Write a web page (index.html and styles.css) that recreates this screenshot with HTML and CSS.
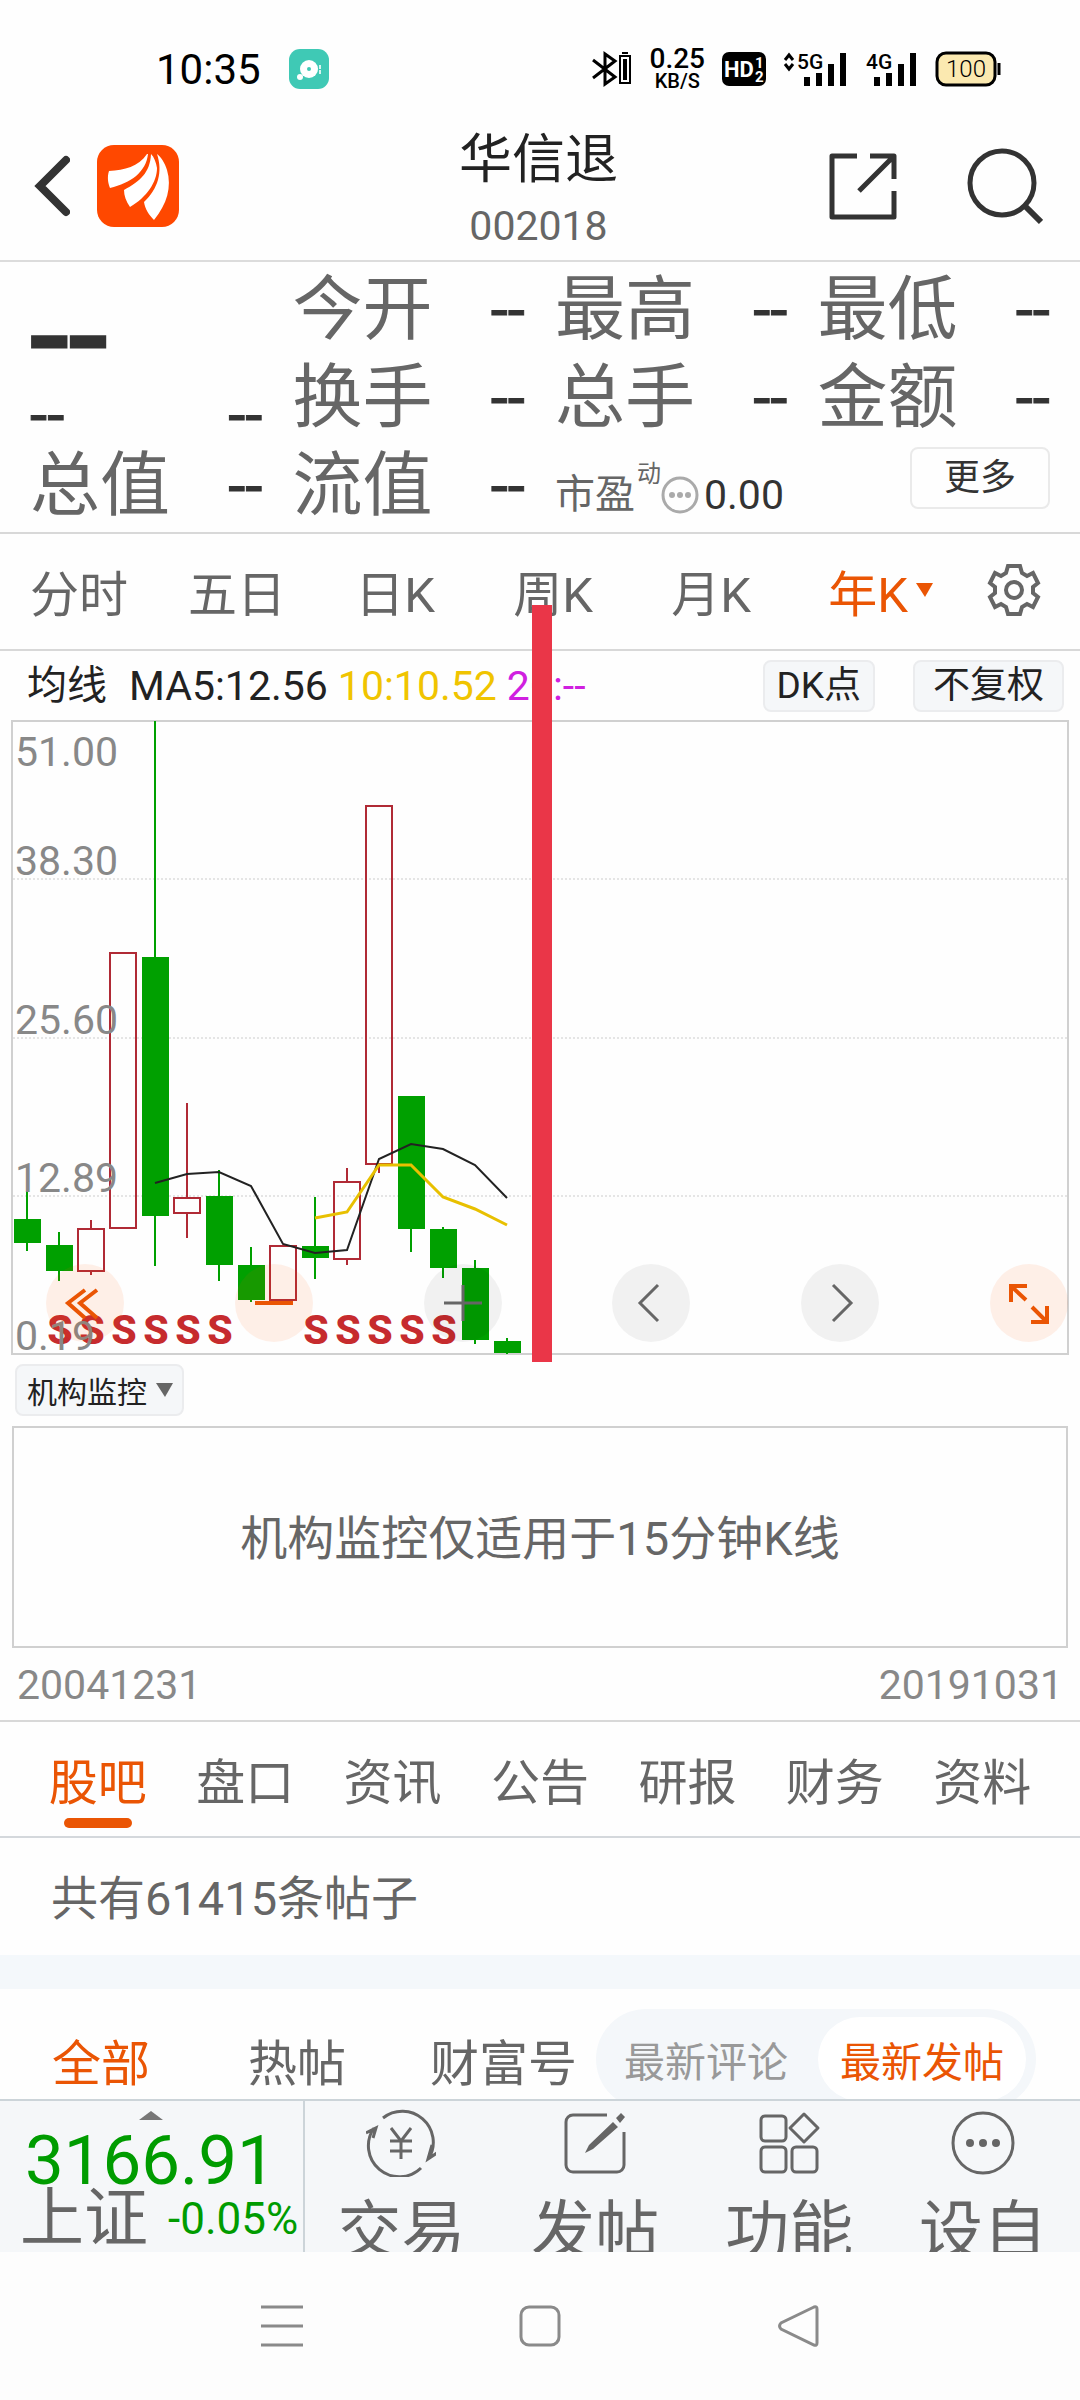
FILE: index.html
```html
<!DOCTYPE html>
<html lang="zh-CN">
<head>
<meta charset="utf-8">
<meta name="viewport" content="width=device-width, initial-scale=1">
<title>华信退 002018</title>
<link rel="stylesheet" href="styles.css">
</head>
<body>
<div class="status">
  <div class="status-side">
    <span class="clock">10:35</span>
    <svg width="40" height="40" viewBox="0 0 40 40"><rect width="40" height="40" rx="11" fill="#3fc9b5"/><circle cx="20" cy="20" r="9" fill="#fff"/><circle cx="20" cy="20" r="2" fill="#3fc9b5"/><circle cx="11" cy="28" r="3" fill="#fff"/><path d="M31 16v9" stroke="#d9f4f0" stroke-width="2" stroke-dasharray="4 1"/></svg>
  </div>
  <div class="status-side status-right">
    <svg width="40" height="36" viewBox="0 0 40 36" fill="none" stroke="#000" stroke-width="3"><path d="M1 9l22 17-10 7V3l10 7L1 27"/><path d="M28 5h10v27H28zM30 2h6" stroke-width="2"/><path d="M33 8v21" stroke-width="4"/></svg>
    <span class="speed"><b>0.25</b><small>KB/S</small></span>
    <svg width="44" height="36" viewBox="0 0 44 36"><rect y="1" width="44" height="34" rx="7"/><text class="hd" x="2" y="26">HD</text><text class="hd-small" x="33" y="17">1</text><text class="hd-small" x="33" y="31">2</text></svg>
    <svg class="signal" width="66" height="36" viewBox="0 0 66 36"><path d="M2 9l4-5 4 5M2 13l4 5 4-5" fill="none" stroke="#000" stroke-width="3"/><text class="net" x="14" y="18">5G</text><path d="M24 35v-9M36 35v-13M48 35V13M60 35V2" stroke="#000" stroke-width="6"/></svg>
    <svg class="signal" width="52" height="36" viewBox="0 0 52 36"><text class="net" x="0" y="18">4G</text><path d="M11 35v-9M23 35v-13M35 35V13M47 35V2" stroke="#000" stroke-width="6"/></svg>
    <svg width="66" height="36" viewBox="0 0 66 36"><rect x="2" y="2" width="58" height="32" rx="9" fill="#fbe9b0" stroke="#000" stroke-width="3"/><path d="M64 12v12" stroke="#000" stroke-width="3"/><text class="charge" x="31" y="26" text-anchor="middle">100</text></svg>
  </div>
</div>

<header class="header">
  <div class="header-side">
    <button class="icon-btn" aria-label="返回"><svg width="36" height="62" viewBox="0 0 36 62" fill="none" stroke="#333" stroke-width="8" stroke-linecap="round"><path d="M32 5L6 31l26 26"/></svg></button>
    <svg class="logo" width="82" height="82" viewBox="0 0 82 82"><rect width="82" height="82" rx="17" fill="#ff4800"/><g fill="#fff"><path d="M50 9C41 22 28 25 12 26c-2 6-1 12 1 17C34 38 49 27 51 9Z"/><path d="M54 9C53 28 43 36 27 45c0 6 2 11 6 17C50 52 60 37 60 23 59 17 57 12 54 9Z"/><path d="M60 9C66 27 61 44 47 57c1 7 5 13 10 18C70 59 75 42 70 25 68 18 64 12 60 9Z"/></g></svg>
  </div>
  <div class="title"><h1>华信退</h1><span>002018</span></div>
  <div class="header-side header-right">
    <button class="icon-btn" aria-label="分享"><svg width="68" height="68" viewBox="0 0 68 68" fill="none" stroke="#333" stroke-width="5" stroke-linejoin="round"><path d="M28 4H3v61h62V39M41 4h24v23M65 4L30 39"/></svg></button>
    <button class="icon-btn" aria-label="搜索"><svg width="76" height="78" viewBox="0 0 76 78" fill="none" stroke="#333" stroke-width="5"><circle cx="35" cy="36" r="32"/><path d="M57 58l17 17" stroke-width="6"/></svg></button>
  </div>
</header>

<section class="quotes">
  <div class="price"><strong>--</strong><div><i>--</i><i>--</i></div></div>
  <div class="cell"><span>今开</span><i>--</i></div>
  <div class="cell"><span>最高</span><i>--</i></div>
  <div class="cell"><span>最低</span><i>--</i></div>
  <div class="cell"><span>换手</span><i>--</i></div>
  <div class="cell"><span>总手</span><i>--</i></div>
  <div class="cell"><span>金额</span><i>--</i></div>
  <div class="cell"><span>总值</span><i>--</i></div>
  <div class="cell"><span>流值</span><i>--</i></div>
  <div class="cell cell-wide">
    <p class="pe">市盈<sup>动</sup><svg width="38" height="38" viewBox="0 0 38 38"><circle cx="19" cy="19" r="17" fill="none" stroke="#aaa" stroke-width="3"/><g fill="#aaa"><circle cx="11" cy="19" r="3"/><circle cx="19" cy="19" r="3"/><circle cx="27" cy="19" r="3"/></g></svg><b>0.00</b></p>
    <button class="more">更多</button>
  </div>
</section>

<nav class="periods">
  <button>分时</button><button>五日</button><button>日K</button><button>周K</button><button>月K</button><button class="on">年K<svg width="18" height="14" viewBox="0 0 18 14"><path d="M0 0h17L9 14Z" fill="#ea5504"/></svg></button>
  <button class="gear" aria-label="设置"><svg width="56" height="56" viewBox="-28 -28 56 56" fill="none" stroke="#666" stroke-width="4"><path d="M-6-24H6L8-17 13-14 19-17 24-7 19-3V3L24 7 19 17 13 14 8 17 6 24H-6L-8 17-13 14-19 17-24 7-19 3V-3L-24-7-19-17-13-14-8-17Z"/><circle r="8"/></svg></button>
</nav>

<section class="kline">
  <div class="legend">
    <span class="ma-name">均线</span><span>MA5:12.56</span><span class="ma10">10:10.52</span><span class="ma20">20:--</span>
    <div class="legend-btns"><button class="chip">DK点</button><button class="chip">不复权</button></div>
  </div>
  <div class="chart">
    <svg class="plot" viewBox="0 720 1080 636">
      <rect x="12" y="721" width="1056" height="633" fill="none" stroke="#d0d0d0" stroke-width="2"/>
      <path d="M13 879h1055M13 1038h1055M13 1196h1055" stroke="#ccc" stroke-dasharray="2 2"/>
      <g stroke="#00a000" stroke-width="2"><path d="M27 1191v60M59 1232v49M155 721v545M219 1170v111M251 1247v55M315 1197v82M411 1229v23M443 1227v51M475 1260v84M507 1338v16"/></g>
      <g fill="#00a000"><path d="M14 1219h27v24H14zM46 1245h27v26H46zM142 957h27v259h-27zM206 1196h27v69h-27zM238 1265h27v35h-27zM302 1246h27v12h-27zM398 1096h27v133h-27zM430 1229h27v39h-27zM462 1268h27v72h-27zM494 1341h27v12h-27z"/></g>
      <g fill="none" stroke="#b02a35" stroke-width="2"><path d="M78 1229h26v42H78zM110 953h26v275h-26zM174 1198h26v15h-26zM270 1246h26v54h-26zM334 1182h26v77h-26zM366 806h26v358h-26z"/><path d="M91 1220v9M91 1271v4M187 1103v95M187 1213v25M283 1300v5M347 1168v14M347 1259v6M379 1164v9"/></g>
      <path d="M155 1183l32-9 32-2 32 14 32 58 32 9 32-3 32-91 32-15 32 5 32 16 32 33" fill="none" stroke="#222" stroke-width="2"/>
      <path d="M315 1218l32-6 32-47h32l32 32 32 12 32 16" fill="none" stroke="#e8c000" stroke-width="3"/>
      <g class="sell"><text x="60" y="1344">S</text><text x="92" y="1344">S</text><text x="124" y="1344">S</text><text x="156" y="1344">S</text><text x="188" y="1344">S</text><text x="220" y="1344">S</text><text x="316" y="1344">S</text><text x="348" y="1344">S</text><text x="380" y="1344">S</text><text x="412" y="1344">S</text><text x="444" y="1344">S</text></g>
      <g class="axis"><text x="15" y="766">51.00</text><text x="15" y="875">38.30</text><text x="15" y="1034">25.60</text><text x="15" y="1192">12.89</text><text x="15" y="1350">0.19</text></g>
    </svg>
    <div class="tools">
      <button class="tool warm" aria-label="最左"><svg viewBox="0 0 78 78"><path d="M39 26L22 39l17 15M51 26L34 39l17 15"/></svg></button>
      <button class="tool warm" aria-label="缩小"><svg viewBox="0 0 78 78"><path d="M20 39h38"/></svg></button>
      <button class="tool" aria-label="放大"><svg viewBox="0 0 78 78"><path d="M20 39h38M39 21v36"/></svg></button>
      <button class="tool" aria-label="左移"><svg viewBox="0 0 78 78"><path d="M46 21L28 39l18 18"/></svg></button>
      <button class="tool" aria-label="右移"><svg viewBox="0 0 78 78"><path d="M32 21l18 18-18 18"/></svg></button>
      <button class="tool warm" aria-label="全屏"><svg viewBox="0 0 78 78"><path d="M21 38V22h16M21 22l15 14M57 42v16H41M57 58L42 43"/></svg></button>
    </div>
  </div>
  <div class="marker"></div>
</section>

<section class="monitor">
  <div class="picker"><select aria-label="指标"><option>机构监控</option></select><svg width="18" height="14" viewBox="0 0 18 14"><path d="M0 0h17L9 14Z" fill="#666"/></svg></div>
  <div class="notice">机构监控仅适用于15分钟K线</div>
  <div class="dates"><span>20041231</span><span>20191031</span></div>
</section>

<nav class="tabs">
  <button class="on">股吧</button><button>盘口</button><button>资讯</button><button>公告</button><button>研报</button><button>财务</button><button>资料</button>
</nav>
<p class="count">共有61415条帖子</p>

<section class="feed">
  <nav class="feed-tabs"><button class="on">全部</button><button>热帖</button><button>财富号</button></nav>
  <div class="sort"><button>最新评论</button><button class="on">最新发帖</button></div>
</section>

<footer class="dock">
  <div class="index">
    <svg class="up" width="24" height="9" viewBox="0 0 24 9"><path d="M0 9L12 0l12 9Z" fill="#777"/></svg>
    <b>3166.91</b>
    <div><span>上证</span><em>-0.05%</em></div>
  </div>
  <nav class="actions">
    <button><svg width="70" height="68" viewBox="366 2108 70 68" fill="none" stroke="#666" stroke-width="3"><path d="M383 2117a31 31 0 0 1 46 40M437 2152l-9 6 4-14M366 2132l10-5-3 10M374 2127a31 31 0 0 0 47 40M391 2127l10 13 10-13M401 2140v18M390 2140h22M390 2150h22"/></svg>交易</button>
    <button><svg width="70" height="68" viewBox="560 2108 70 68" fill="none" stroke="#666" stroke-width="3"><path d="M607 2114h-34a7 7 0 0 0-7 7v43a7 7 0 0 0 7 7h44a7 7 0 0 0 7-7v-33"/><path d="M613 2121l5 5-25 22-8 4 4-8zM616 2117l5-5 4 4-5 6z" fill="#666" stroke="none"/></svg>发帖</button>
    <button><svg width="70" height="68" viewBox="754 2108 70 68" fill="none" stroke="#666" stroke-width="3"><rect x="761" y="2115" width="25" height="25" rx="4"/><rect x="761" y="2146" width="25" height="25" rx="4"/><rect x="792" y="2146" width="25" height="25" rx="4"/><path d="M804 2113l14 14-14 14-14-14z" stroke-linejoin="round"/></svg>功能</button>
    <button><svg width="70" height="68" viewBox="948 2108 70 68" fill="none" stroke="#666" stroke-width="3"><circle cx="983" cy="2142" r="30"/><g fill="#666" stroke="none"><circle cx="970" cy="2142" r="4"/><circle cx="983" cy="2142" r="4"/><circle cx="996" cy="2142" r="4"/></g></svg>设自</button>
  </nav>
</footer>

<nav class="system">
  <button aria-label="最近任务"><svg width="42" height="42" viewBox="0 0 42 42"><path d="M0 2h42M0 21h42M0 40h42"/></svg></button>
  <button aria-label="主页"><svg width="42" height="42" viewBox="0 0 42 42"><rect x="2" y="2" width="38" height="38" rx="8"/></svg></button>
  <button aria-label="后退"><svg width="42" height="42" viewBox="0 0 42 42"><path d="M37 2L4 18q-3 3 0 6l33 16q3 1 3-2V4q0-3-3-2Z"/></svg></button>
</nav>
</body>
</html>
```
FILE: styles.css
```css
* { box-sizing: border-box; }
body { margin: 0; background: #fefefe; color: #666; font-family: Roboto, "Noto Sans CJK SC", sans-serif; font-size: 49px; }
button { border: 0; padding: 0; background: none; color: inherit; font: inherit; white-space: nowrap; }
svg { display: block; flex: none; }
h1, p { margin: 0; font-weight: 400; }
b, i, em, strong { font-weight: 400; font-style: normal; }

.status { display: flex; justify-content: space-between; height: 112px; padding: 26px 79px 0 156px; color: #000; }
.status-side { display: flex; align-items: center; gap: 28px; }
.clock { font-size: 42px; }
.status-right { gap: 17px; }
.speed { display: flex; flex-direction: column; align-items: center; line-height: 20px; }
.speed b { font-size: 28px; font-weight: 500; line-height: 24px; }
.speed small { font-size: 20px; font-weight: 500; }
.hd { fill: #fff; font-size: 22px; font-weight: 700; }
.hd-small { fill: #fff; font-size: 15px; font-weight: 700; }
.net { font-size: 21px; font-weight: 500; }
.charge { font-size: 24px; font-weight: 300; }

.header { display: grid; grid-template-columns: 1fr auto 1fr; align-items: center; height: 150px; padding: 0 37px 0 34px; border-bottom: 2px solid #dcdcdc; }
.header-side { display: flex; align-items: center; gap: 27px; }
.header-right { justify-content: flex-end; gap: 70px; }
.title { display: flex; flex-direction: column; align-items: center; padding-top: 14px; line-height: 66px; }
.title h1 { color: #222; font-size: 53px; }
.title span { font-size: 41px; }

.quotes { display: grid; grid-template-columns: repeat(4, 1fr); grid-auto-rows: 88px; padding: 4px 0 2px 30px; border-bottom: 2px solid #d8d8d8; }
.quotes i { color: #333; font-size: 62px; -webkit-text-stroke: 1px #333; }
.price { grid-row: span 2; padding-right: 30px; }
.price strong { display: block; height: 122px; color: #333; font-size: 140px; line-height: 140px; -webkit-text-stroke: 3px #333; }
.price div { display: flex; justify-content: space-between; line-height: 54px; }
.cell { display: flex; align-items: center; justify-content: space-between; padding-right: 30px; font-size: 70px; line-height: 88px; }
.cell-wide { grid-column: span 2; }
.pe { display: flex; align-items: center; padding-top: 18px; font-size: 40px; line-height: 66px; }
.pe sup { align-self: flex-start; font-size: 24px; line-height: 24px; padding-left: 2px; }
.pe b { padding-left: 5px; color: #333; font-size: 41px; }
.more { width: 140px; height: 62px; margin-bottom: 16px; border: 2px solid #eaeaea; border-radius: 8px; color: #333; font-size: 36px; line-height: 54px; }

.periods { display: grid; grid-template-columns: repeat(6, 158fr) 132fr; height: 117px; border-bottom: 2px solid #d8d8d8; }
.periods button { display: flex; align-items: center; justify-content: center; gap: 8px; padding-bottom: 3px; }
.on { color: #ea5504; }
.periods .on svg { margin-right: -24px; }

.kline { position: relative; }
.legend { display: flex; align-items: center; gap: 10px; height: 69px; padding: 0 16px 0 27px; color: #222; font-size: 41px; }
.ma-name { padding-right: 12px; font-size: 40px; line-height: 56px; }
.ma10 { color: #f0c400; }
.ma20 { color: #d020e0; }
.legend-btns { display: flex; gap: 38px; margin-left: auto; }
.chip { height: 52px; padding: 0 12px; border: 2px solid #ebecee; border-radius: 8px; background: #f5f7f9; font-size: 37px; line-height: 48px; }
.chip + .chip { padding: 0 18px; }
.chart { position: relative; }
.plot { width: 100%; height: auto; }
.axis { fill: #888; font-size: 41px; }
.sell { fill: #c62b2e; font-size: 41px; font-weight: 800; text-anchor: middle; }
.tools { position: absolute; left: 46px; right: 12px; bottom: 14px; display: flex; justify-content: space-between; }
.tool { width: 78px; height: 78px; border-radius: 50%; background: rgba(0, 0, 0, .05); }
.tool.warm { background: rgba(255, 90, 0, .09); }
.tool path { fill: none; stroke: #666; stroke-width: 3; }
.tool.warm path { stroke: #ea5504; stroke-width: 4; }
.marker { position: absolute; top: -46px; bottom: -6px; left: 49.3%; width: 20px; background: #ea3648; }

.monitor { padding: 8px 12px 0; border-bottom: 2px solid #d8d8d8; }
.picker { position: relative; display: flex; align-items: center; margin-left: 3px; height: 52px; width: 169px; border: 2px solid #ebecee; border-radius: 8px; background: #f5f7f9; }
.picker select { width: 100%; height: 100%; padding: 0 0 0 10px; border: 0; background: none; appearance: none; color: #222; font: 30px "Noto Sans CJK SC", sans-serif; }
.picker svg { position: absolute; right: 8px; pointer-events: none; }
.notice { display: flex; align-items: center; justify-content: center; height: 222px; margin-top: 10px; border: 2px solid #d0d0d0; font-size: 47px; line-height: 60px; padding-top: 3px; }
.dates { display: flex; justify-content: space-between; padding: 2px 5px 0; color: #888; font-size: 41px; line-height: 70px; }

.tabs { display: grid; grid-template-columns: repeat(7, 1fr); height: 116px; padding: 0 24px; border-bottom: 2px solid #d4d8dc; }
.tabs button { position: relative; padding-bottom: 2px; }
.tabs .on::after { content: ""; position: absolute; left: 50%; bottom: 8px; width: 68px; height: 10px; margin-left: -34px; border-radius: 5px; background: #ea5504; }
.count { padding: 4px 0 0 51px; border-bottom: 34px solid #f4f8fb; font-size: 47px; line-height: 113px; }

.feed { display: flex; justify-content: space-between; height: 110px; padding: 20px 44px 0 52px; overflow: hidden; }
.feed-tabs { display: flex; align-items: center; height: 100px; }
.feed-tabs button { margin-right: 98px; }
.feed-tabs button + button { margin-right: 84px; }
.feed-tabs button:last-child { margin-right: 0; }
.sort { display: flex; height: 100px; padding: 8px 10px; border-radius: 50px; background: #f4f7fa; font-size: 41px; }
.sort button { width: 208px; border-radius: 42px; color: #999; }
.sort button:first-child { width: 212px; padding-right: 12px; }
.sort .on { background: #fff; color: #ea5504; }

.dock { display: flex; height: 153px; overflow: hidden; border-top: 2px solid #ccd4d9; background: #f5f7f9; }
.index { flex: none; width: 28.2%; border-right: 2px solid #ccd4d9; white-space: nowrap; }
.index b { display: block; padding-left: 25px; color: #009c00; font-size: 69px; line-height: 82px; }
.index div { display: flex; align-items: center; gap: 20px; padding-left: 20px; font-size: 64px; line-height: 34px; }
.index em { color: #009c00; font-size: 44px; }
.up { margin: 10px auto 0; }
.actions { flex: 1; display: grid; grid-template-columns: repeat(4, 1fr); font-size: 64px; line-height: 110px; }
.actions button { display: flex; flex-direction: column; align-items: center; padding-top: 8px; }

.system { display: flex; justify-content: space-around; height: 148px; padding: 0 153px; background: #fdfdfd; }
.system svg { fill: none; stroke: #8a8a8a; stroke-width: 3; }
```
